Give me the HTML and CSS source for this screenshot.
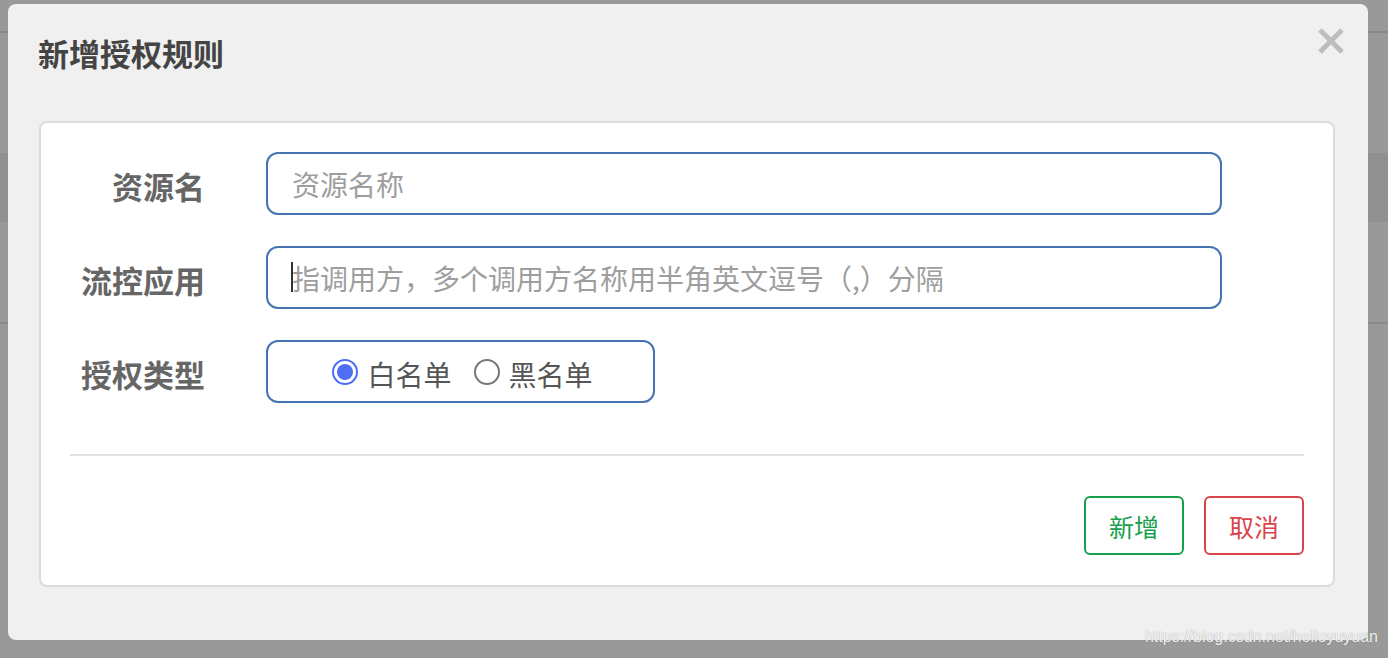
FILE: index.html
```html
<!DOCTYPE html>
<html lang="zh-CN">
<head>
<meta charset="utf-8">
<title>新增授权规则</title>
<link rel="stylesheet" href="styles.css">
</head>
<body>
<div class="backdrop">
  <div class="bg-top"></div>
  <div class="bg-line"></div>
  <div class="bg-gap1"></div>
  <div class="bg-band"></div>
  <div class="bg-gap2"></div>
  <div class="bg-line"></div>
</div>

<div class="modal">
  <div class="modal-header">
    <h4 class="modal-title">新增授权规则</h4>
    <button class="close" type="button" aria-label="关闭">
      <svg width="28" height="26" viewBox="0 0 28 26">
        <line x1="3" y1="2" x2="25" y2="24" stroke="#bdbdbd" stroke-width="5"/>
        <line x1="25" y1="2" x2="3" y2="24" stroke="#bdbdbd" stroke-width="5"/>
      </svg>
    </button>
  </div>
  <div class="panel">
    <div class="form-row">
      <label class="form-label">资源名</label>
      <input class="form-input" type="text" placeholder="资源名称">
    </div>
    <div class="form-row">
      <label class="form-label">流控应用</label>
      <div class="input-wrap focused">
        <input class="form-input" type="text" placeholder="指调用方，多个调用方名称用半角英文逗号（,）分隔">
      </div>
    </div>
    <div class="form-row">
      <label class="form-label">授权类型</label>
      <div class="radio-box">
        <span class="radio checked"></span><span class="radio-text">白名单</span>
        <span class="radio"></span><span class="radio-text">黑名单</span>
      </div>
    </div>
    <div class="divider"></div>
    <div class="actions">
      <button class="btn btn-ok" type="button">新增</button>
      <button class="btn btn-cancel" type="button">取消</button>
    </div>
  </div>
</div>

<div class="watermark">https://blog.csdn.net/helloyuyuan</div>
</body>
</html>
```

FILE: styles.css
```css
html, body {
  margin: 0;
  padding: 0;
}
body {
  width: 1388px;
  height: 658px;
  overflow: hidden;
  background: #999999;
  position: relative;
  font-family: "Noto Sans CJK SC", "Noto Sans", sans-serif;
}

.backdrop {
  display: flex;
  flex-direction: column;
}
.bg-top { height: 31px; }
.bg-line { height: 2px; background: #8a8a8a; }
.bg-gap1 { height: 120px; }
.bg-band { height: 69px; background: #909091; }
.bg-gap2 { height: 100px; }

.modal {
  position: absolute;
  left: 8px;
  top: 4px;
  width: 1360px;
  height: 636px;
  box-sizing: border-box;
  background: #f0f0f0;
  border-radius: 8px;
  padding: 0 33px 0 31px;
}

.modal-header {
  height: 117px;
  display: flex;
  justify-content: space-between;
  align-items: flex-start;
  margin-right: -10px;
}
.modal-title {
  margin: 33px 0 0 -1px;
  font-size: 31px;
  line-height: 31px;
  font-weight: 700;
  color: #444444;
}
.close {
  margin-top: 24px;
  padding: 0;
  border: 0;
  background: transparent;
  width: 28px;
  height: 26px;
  display: block;
}
.close svg { display: block; }

.panel {
  height: 466px;
  box-sizing: border-box;
  background: #ffffff;
  border: 2px solid #dcdcdc;
  border-radius: 8px;
  padding: 29px 0 30px 0;
  display: flex;
  flex-direction: column;
}

.form-row {
  display: flex;
  align-items: center;
  height: 63px;
  margin-bottom: 31px;
}
.form-row:nth-child(3) { margin-bottom: 0; }

.form-label {
  width: 164px;
  margin-right: 61px;
  text-align: right;
  font-size: 31px;
  line-height: 31px;
  font-weight: 700;
  color: #666666;
  padding-top: 4px;
}

.input-wrap {
  position: relative;
}
.input-wrap.focused::before {
  content: "";
  position: absolute;
  left: 25px;
  top: 16px;
  width: 2px;
  height: 30px;
  background: #333333;
}

.form-input {
  width: 956px;
  height: 63px;
  box-sizing: border-box;
  border: 2px solid #4573b3;
  border-radius: 12px;
  padding: 0 20px 0 24px;
  font-family: "Noto Sans CJK SC", "Noto Sans", sans-serif;
  font-size: 28px;
  color: #333333;
  background: #ffffff;
  outline: none;
}
.form-input::placeholder {
  color: #9e9e9e;
}

.radio-box {
  width: 389px;
  height: 63px;
  box-sizing: border-box;
  border: 2px solid #4573b3;
  border-radius: 12px;
  display: flex;
  align-items: center;
  justify-content: center;
  padding-left: 4px;
}
.radio {
  width: 26px;
  height: 26px;
  box-sizing: border-box;
  border-radius: 50%;
  border: 2px solid #777777;
  background: #ffffff;
  margin-right: 9px;
  position: relative;
}
.radio.checked {
  border-color: #4d6ef5;
}
.radio.checked::after {
  content: "";
  position: absolute;
  left: 3px;
  top: 3px;
  width: 16px;
  height: 16px;
  border-radius: 50%;
  background: #4d6ef5;
}
.radio-text {
  font-size: 28px;
  line-height: 30px;
  color: #555555;
  padding-top: 4px;
  margin-right: 22px;
}
.radio-text:last-child { margin-right: 0; }

.divider {
  height: 2px;
  background: #e0e0e0;
  margin: 51px 29px 40px 29px;
}

.actions {
  display: flex;
  justify-content: flex-end;
  gap: 20px;
  padding-right: 29px;
}
.btn {
  width: 100px;
  height: 59px;
  box-sizing: border-box;
  border-radius: 6px;
  background: #ffffff;
  font-family: "Noto Sans CJK SC", "Noto Sans", sans-serif;
  font-size: 25px;
  padding: 0;
}
.btn-ok {
  border: 2px solid #17a04c;
  color: #17a04c;
}
.btn-cancel {
  border: 2px solid #d9444b;
  color: #d9444b;
}

.watermark {
  position: absolute;
  right: 10px;
  top: 627px;
  font-family: "Liberation Sans", Arial, sans-serif;
  font-size: 16px;
  line-height: 20px;
  color: rgba(255, 255, 255, 0.9);
  text-shadow: 0 0 1px rgba(100, 100, 100, 0.7);
}
```
